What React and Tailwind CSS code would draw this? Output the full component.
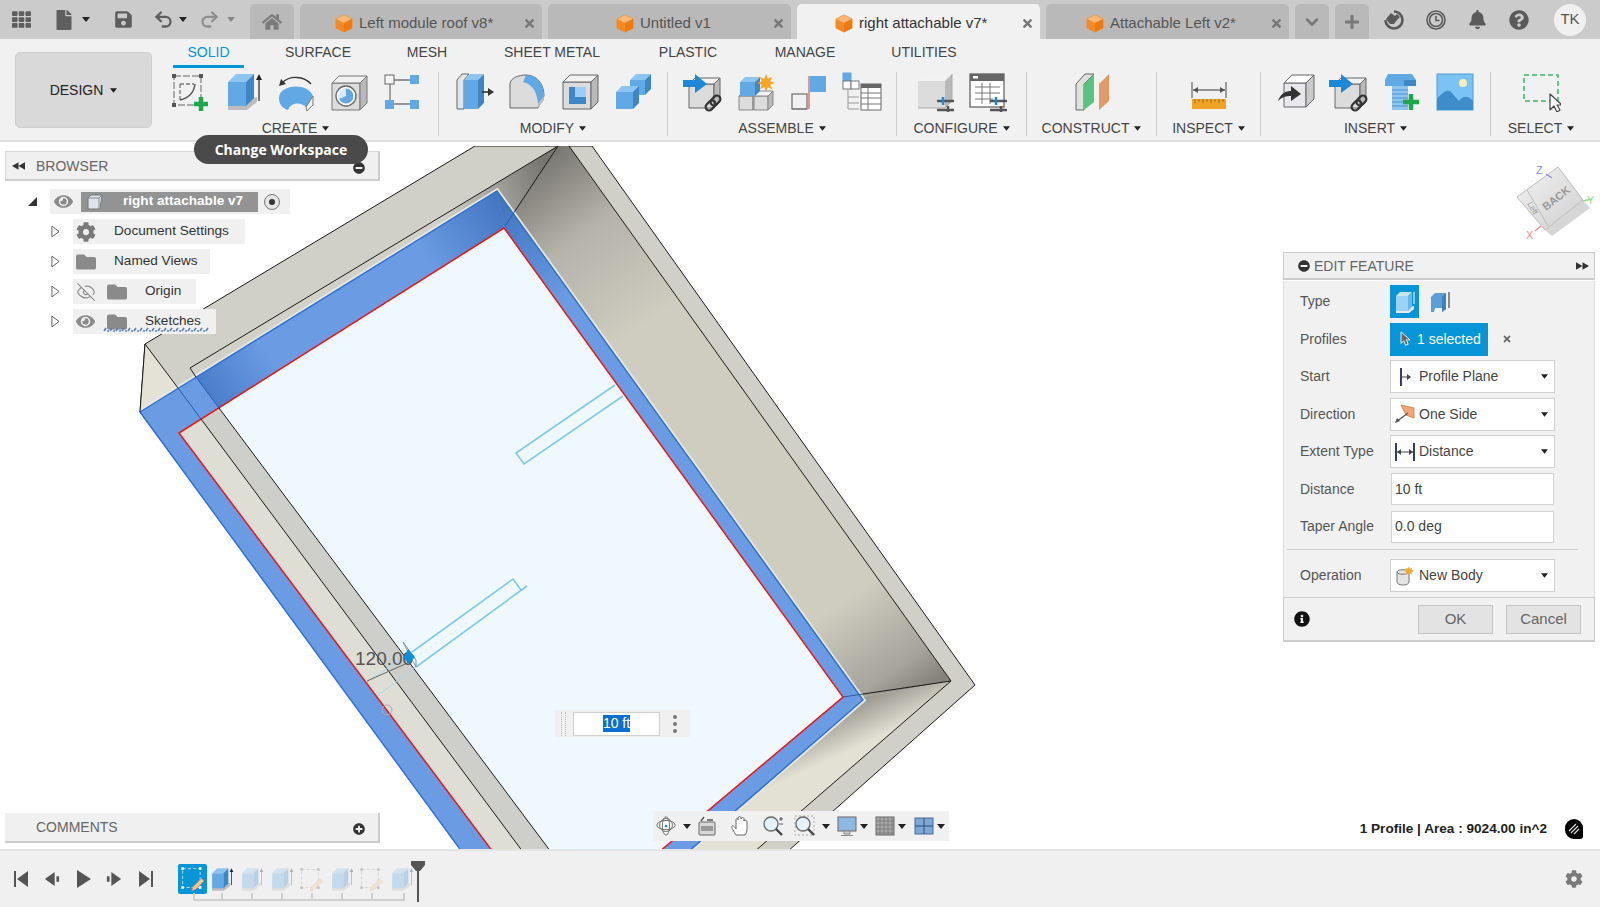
import { FaBell, FaCog, FaEye, FaFile, FaFolder, FaHome, FaInfoCircle, FaMinusCircle, FaPlus, FaPlusCircle, FaQuestionCircle, FaSave, FaTh, FaTimes } from 'react-icons/fa'
import { ChevronDown, EyeOff, Redo2, Undo2 } from 'lucide-react'

const BLUE = { front: '#62a8e5', top: '#8ec4f0', side: '#3f86c6' }
const GRAY = { front: '#dcdcdc', top: '#f2f2f2', side: '#b9b9b9' }

function Cube({ x, y, w, h, d, c = GRAY, stroke = 'none' }) {
  return (
    <g stroke={stroke} strokeWidth="1" strokeLinejoin="round">
      <rect x={x} y={y} width={w} height={h} fill={c.front} />
      <polygon points={`${x},${y} ${x + d},${y - d} ${x + w + d},${y - d} ${x + w},${y}`} fill={c.top} />
      <polygon points={`${x + w},${y} ${x + w + d},${y - d} ${x + w + d},${y + h - d} ${x + w},${y + h}`} fill={c.side} />
    </g>
  )
}

function Svg({ children, className = 'w-10 h-10', box = '0 0 40 40' }) {
  return <svg viewBox={box} className={`${className} shrink-0`}>{children}</svg>
}

const Plus = ({ x, y, s = 7 }) => (
  <path d={`M${x - s} ${y}H${x + s}M${x} ${y - s}V${y + s}`} stroke="#1fa84a" strokeWidth="4.5" />
)

const Chain = ({ x, y }) => (
  <g fill="none" stroke="#333" strokeWidth="2.2" transform={`rotate(-45 ${x} ${y})`}>
    <rect x={x - 9} y={y - 3.5} width="11" height="7" rx="3.5" />
    <rect x={x - 2} y={y - 3.5} width="11" height="7" rx="3.5" />
  </g>
)

const Sliders = ({ x, y }) => (
  <g>
    <path d={`M${x} ${y}H${x + 17}M${x} ${y + 9}H${x + 17}`} stroke="#555" strokeWidth="2.5" />
    <path d={`M${x + 6} ${y - 4}V${y + 4}`} stroke="#1e88d8" strokeWidth="2.5" />
    <path d={`M${x + 11} ${y + 5}V${y + 13}`} stroke="#555" strokeWidth="2.5" />
  </g>
)

const Star = ({ cx, cy, r = 8, fill = '#f5a623' }) => {
  const pts = []
  for (let i = 0; i < 16; i++) {
    const a = (i * Math.PI) / 8
    const rad = i % 2 ? r * 0.5 : r
    pts.push(`${cx + rad * Math.cos(a)},${cy + rad * Math.sin(a)}`)
  }
  return <polygon points={pts.join(' ')} fill={fill} />
}

function SketchIcon({ pencil, light, className }) {
  const c = light ? '#fff' : '#666'
  return (
    <Svg className={className}>
      <rect x="4" y="4" width="27" height="29" fill="none" stroke={c} strokeWidth="1" strokeDasharray={pencil ? '5 3' : '7 2'} />
      {[[4, 4], [31, 4], [4, 33], [31, 33]].map(([x, y]) => (
        <rect key={x + '-' + y} x={x - 2} y={y - 2} width="4" height="4" fill={light ? '#fff' : '#555'} />
      ))}
      {pencil ? (
        <path d="M20 32L33 19l4 4-13 13-6 2z" fill="#f4c98a" stroke="#e26a6a" strokeWidth="1" />
      ) : (
        <>
          <path d="M10 12h14M10 12v16" stroke="#777" strokeWidth="1.3" strokeDasharray="4 2" fill="none" />
          <path d="M10 28C19 26 24 20 25 12" stroke="#555" strokeWidth="1.5" fill="none" />
          <Plus x={31} y={32} />
        </>
      )}
    </Svg>
  )
}

function ExtrudeIcon({ className }) {
  return (
    <Svg className={className}>
      <polygon points="5,33 5,38 24,38 34,30 34,25" fill="#bdbdbd" />
      <Cube x={5} y={10} w={18} h={24} d={8} c={BLUE} />
      <path d="M36 29V5" stroke="#222" strokeWidth="1.2" />
      <path d="M36 2l-3 6h6z" fill="#222" />
    </Svg>
  )
}

const RevolveIcon = () => (
  <Svg>
    <path d="M3 26C3 12 32 10 37 24L30 35C25 30 15 30 12 38 6 36 3 32 3 26z" fill="#62a8e5" />
    <path d="M30 35L37 24V33L31 39z" fill="#f2f2f2" stroke="#777" strokeWidth="1" />
    <path d="M6 11C14 3 28 4 35 12" stroke="#333" strokeWidth="1.3" fill="none" />
    <path d="M3 14l2-7 5 5z" fill="#333" />
  </Svg>
)

const HoleIcon = () => (
  <Svg>
    <Cube x={3} y={11} w={28} h={27} d={7} stroke="#777" />
    <circle cx="17" cy="24" r="10" fill="#fff" stroke="#666" strokeWidth="1.3" />
    <circle cx="17" cy="24" r="7.5" fill="#62a8e5" />
    <path d="M17 24V16.5A7.5 7.5 0 0 0 10 27z" fill="#dbeaf7" />
  </Svg>
)

const PatternIcon = () => (
  <Svg>
    <path d="M8 8H32M8 8V32M8 32H32" stroke="#777" strokeWidth="1.3" />
    <rect x="3" y="3" width="9" height="9" fill="#f4f4f4" stroke="#666" />
    <rect x="28" y="3" width="9" height="9" fill="#62a8e5" />
    <rect x="3" y="28" width="9" height="9" fill="#62a8e5" />
    <rect x="28" y="28" width="9" height="9" fill="#62a8e5" />
  </Svg>
)

const PressIcon = () => (
  <Svg>
    <polygon points="3,8 8,2 15,2 10,8 10,37 3,37" fill="#e5e5e5" stroke="#666" />
    <Cube x={10} y={8} w={14} h={29} d={6} c={BLUE} />
    <path d="M28 20h8" stroke="#333" strokeWidth="1.6" />
    <path d="M40 20l-6-4v8z" fill="#333" />
  </Svg>
)

const FilletIcon = () => (
  <Svg>
    <path d="M3 36V12C3 6 12 3 19 3C30 3 37 12 37 24L31 36z" fill="#dcdcdc" stroke="#666" />
    <path d="M19 3C30 3 37 12 37 24L31 32C30 21 27 13 16 10z" fill="#62a8e5" />
    <path d="M31 32L37 24V28L31 36z" fill="#bcbcbc" />
  </Svg>
)

const ShellIcon = () => (
  <Svg>
    <Cube x={3} y={10} w={28} h={27} d={7} stroke="#666" />
    <rect x="9" y="15" width="17" height="17" fill="#9dcdf2" />
    <path d="M9 15h6v10h11v7H9z" fill="#3f86c6" />
  </Svg>
)

const CombineIcon = () => (
  <Svg>
    <Cube x={17} y={8} w={15} h={15} d={6} c={BLUE} />
    <Cube x={3} y={20} w={17} h={17} d={6} c={BLUE} />
  </Svg>
)

const LinkCubeIcon = () => (
  <Svg>
    <Cube x={6} y={12} w={25} h={24} d={6} stroke="#666" />
    <path d="M0 8h12V2l12 10-12 9v-6H0z" fill="#1e88d8" />
    <Chain x={30} y={31} />
  </Svg>
)

const NewCompIcon = () => (
  <Svg>
    <Cube x={3} y={24} w={14} h={14} d={5} stroke="#888" />
    <Cube x={18} y={24} w={14} h={14} d={5} stroke="#888" />
    <Cube x={4} y={10} w={15} h={14} d={5} c={BLUE} />
    <Star cx={30} cy={11} r={9} />
  </Svg>
)

const JointIcon = () => (
  <Svg>
    <rect x="3" y="22" width="15" height="15" fill="none" stroke="#777" strokeWidth="1.3" />
    <path d="M20 4V37" stroke="#e26a6a" strokeWidth="1.4" />
    <rect x="21" y="4" width="16" height="16" fill="#62a8e5" />
    <path d="M18 37H3" stroke="#777" />
  </Svg>
)

const TreeTableIcon = () => (
  <Svg>
    <rect x="1" y="1" width="8" height="8" fill="#62a8e5" stroke="#62a8e5" />
    <rect x="1" y="9" width="8" height="8" fill="#fff" stroke="#777" />
    <rect x="9" y="9" width="8" height="8" fill="#fff" stroke="#777" />
    <path d="M6 17V37H17M6 25H17M6 31H17" stroke="#999" fill="none" />
    <rect x="19" y="12" width="20" height="26" fill="#fff" stroke="#666" />
    <rect x="19" y="12" width="20" height="4" fill="#666" />
    <path d="M19 21H39M19 26H39M19 32H39M26 16V38" stroke="#777" />
  </Svg>
)

const ConfigCubeIcon = () => (
  <Svg>
    <Cube x={3} y={9} w={27} h={27} d={7} />
    <path d="M3 36H30L37 29V2" stroke="#aaa" fill="none" />
    <Sliders x={22} y={29} />
  </Svg>
)

const ConfigTableIcon = () => (
  <Svg>
    <rect x="2" y="2" width="34" height="33" fill="#fff" stroke="#666" strokeWidth="1.3" />
    <rect x="2" y="2" width="34" height="7" fill="#666" />
    <rect x="5" y="4" width="5" height="2.5" fill="#fff" />
    <path d="M7 15H32M7 21H32M7 27H25M14 11V32M22 11V32" stroke="#777" />
    <Sliders x={22} y={29} />
  </Svg>
)

const ConstructIcon = () => (
  <Svg>
    <polygon points="4,12 13,2 22,2 12,12 12,38 4,38" fill="#e0e0e0" stroke="#666" />
    <polygon points="12,12 22,2 22,30 12,38" fill="#5ac27f" />
    <polygon points="27,12 37,2 37,29 27,38" fill="#e29a68" />
  </Svg>
)

const InspectIcon = () => (
  <Svg>
    <path d="M3 10V26M37 10V26" stroke="#666" strokeWidth="1.2" />
    <path d="M4 18H36" stroke="#555" strokeWidth="1.2" />
    <path d="M4 18l5-3v6zM36 18l-5-3v6z" fill="#555" />
    <rect x="3" y="27" width="34" height="10" fill="#f0a326" />
    <path d="M6 27v4M10 27v3M14 27v4M18 27v3M22 27v4M26 27v3M30 27v4M34 27v3" stroke="#9a6a10" />
  </Svg>
)

const InsertCubeIcon = () => (
  <Svg>
    <Cube x={8} y={11} w={22} h={24} d={8} c={{ front: '#e8e8ec', top: '#fff', side: '#c9c9c9' }} stroke="#666" />
    <path d="M2 29C5 21 10 19 15 19V14L25 22 15 29V24C10 24 6 25 2 29z" fill="#333" />
  </Svg>
)

const BoltIcon = () => (
  <Svg>
    <path d="M3 8L6 2H30L34 8V14H3z" fill="#62a8e5" />
    <rect x="22" y="8" width="12" height="6" fill="#3f86c6" />
    <rect x="10" y="14" width="16" height="24" fill="#8ec4f0" />
    <path d="M10 18H26M10 22H26M10 26H26M10 30H26M10 34H26" stroke="#4b92d0" />
    <Plus x={29} y={30} s={8} />
  </Svg>
)

const PictureIcon = () => (
  <Svg>
    <rect x="2" y="2" width="36" height="36" fill="#7cc3f5" stroke="#4f9bd6" />
    <circle cx="28" cy="11" r="4" fill="#f6efb6" />
    <path d="M2 38V27C8 20 12 17 16 20L24 29C27 25 32 22 38 29V38z" fill="#3f8ccb" />
  </Svg>
)

const SelectIcon = () => (
  <Svg>
    <rect x="3" y="3" width="34" height="26" fill="none" stroke="#3fb36a" strokeWidth="1.5" strokeDasharray="5 3" />
    <path d="M29 22V38L33 34 36 40 39 38 36 33H41z" fill="#fff" stroke="#444" strokeWidth="1.2" strokeLinejoin="round" />
  </Svg>
)

const OrangeCube = () => (
  <Svg className="w-[18px] h-[19px]" box="0 0 18 19">
    <polygon points="9,1 17,5 17,14 9,18 1,14 1,5" fill="#f28a26" stroke="#f28a26" strokeLinejoin="round" />
    <polygon points="9,1 17,5 9,9 1,5" fill="#fab878" />
    <polygon points="9,9 17,5 17,14 9,18" fill="#ee7a10" />
  </Svg>
)

const Caret = ({ className = '' }) => (
  <svg viewBox="0 0 8 5" className={`w-2 h-[5px] shrink-0 ${className}`}>
    <polygon points="0,0 8,0 4,5" fill="#222" />
  </svg>
)

const GROUPS = [
  { label: 'CREATE', w: 'w-[274px] pr-[12px]', icons: [<SketchIcon key="a" />, <ExtrudeIcon key="b" />, <RevolveIcon key="c" />, <HoleIcon key="d" />, <PatternIcon key="e" />] },
  { label: 'MODIFY', w: 'w-[229px]', icons: [<PressIcon key="a" />, <FilletIcon key="b" />, <ShellIcon key="c" />, <CombineIcon key="d" />] },
  { label: 'ASSEMBLE', w: 'w-[229px]', icons: [<LinkCubeIcon key="a" />, <NewCompIcon key="b" />, <JointIcon key="c" />, <TreeTableIcon key="d" />] },
  { label: 'CONFIGURE', w: 'w-[130px]', icons: [<ConfigCubeIcon key="a" />, <ConfigTableIcon key="b" />] },
  { label: 'CONSTRUCT', w: 'w-[130px]', icons: [<ConstructIcon key="a" />] },
  { label: 'INSPECT', w: 'w-[104px]', icons: [<InspectIcon key="a" />] },
  { label: 'INSERT', w: 'w-[230px]', icons: [<InsertCubeIcon key="a" />, <LinkCubeIcon key="b" />, <BoltIcon key="c" />, <PictureIcon key="d" />] },
  { label: 'SELECT', w: 'w-[100px]', icons: [<SelectIcon key="a" />], last: true },
]

const RIBBON_TABS = [
  ['SOLID', 'w-[71px] text-[#0696d7] border-b-[3px] border-[#0696d7]'],
  ['SURFACE', 'w-[148px]'],
  ['MESH', 'w-[70px]'],
  ['SHEET METAL', 'w-[180px]'],
  ['PLASTIC', 'w-[92px]'],
  ['MANAGE', 'w-[142px]'],
  ['UTILITIES', 'w-[96px]'],
]

function DocTab({ name, width, pad, active }) {
  return (
    <div className={`${width} ${pad} ${active ? 'bg-[#f1f1f1] text-[#333]' : 'bg-[#b9b9b9] text-[#555]'} h-[35px] pt-[3px] rounded-t-[5px] flex items-center gap-[6px] pr-[6px] shrink-0`}>
      <OrangeCube />
      <span className="text-[15px] whitespace-nowrap">{name}</span>
      <FaTimes className="ml-auto text-[13px] text-[#777]" />
    </div>
  )
}

function TitleBar() {
  return (
    <div className="h-[39px] bg-[#cbcbcb] flex items-end shrink-0">
      <div className="w-[250px] h-full flex items-center text-[#5e5e5e] shrink-0">
        <FaTh className="ml-[12px] text-[19px]" />
        <FaFile className="ml-[23px] text-[20px]" />
        <Caret className="ml-[8px]" />
        <FaSave className="ml-[24px] text-[19px]" />
        <Undo2 className="ml-[20px] w-[21px] h-[21px]" strokeWidth={2.6} />
        <Caret className="ml-[5px]" />
        <Redo2 className="ml-[12px] w-[21px] h-[21px] text-[#8f8f8f]" strokeWidth={2.6} />
        <Caret className="ml-[7px] opacity-40" />
      </div>
      <div className="w-[44px] h-[35px] bg-[#b9b9b9] rounded-t-[5px] flex items-center justify-center text-[#7b7b7b] shrink-0">
        <FaHome className="text-[20px]" />
      </div>
      <div className="flex gap-[6px] ml-[6px]">
        <DocTab name="Left module roof v8*" width="w-[242px]" pad="pl-[35px]" />
        <DocTab name="Untitled v1" width="w-[243px]" pad="pl-[68px]" />
        <DocTab name="right attachable v7*" width="w-[243px]" pad="pl-[38px]" active />
        <DocTab name="Attachable Left v2*" width="w-[243px]" pad="pl-[40px]" />
        <div className="w-[34px] h-[35px] bg-[#b9b9b9] rounded-t-[5px] flex items-center justify-center text-[#777]">
          <ChevronDown className="w-[20px] h-[20px]" strokeWidth={3} />
        </div>
        <div className="w-[34px] h-[35px] bg-[#b9b9b9] rounded-t-[5px] flex items-center justify-center text-[#777]">
          <FaPlus className="text-[16px]" />
        </div>
      </div>
      <div className="h-full flex items-center text-[#5a5a5a]">
        <svg viewBox="0 0 20 20" className="ml-[15px] w-5 h-5 shrink-0">
          <path d="M10 1.5A8.5 8.5 0 1 1 1.5 10" fill="none" stroke="#5a5a5a" strokeWidth="2.6" />
          <path d="M2 9L7 3l4 3 2-2 3 3-3 3-3 4H6z" fill="#5a5a5a" />
        </svg>
        <svg viewBox="0 0 20 20" className="ml-[22px] w-5 h-5 shrink-0">
          <circle cx="10" cy="10" r="9" fill="none" stroke="#5a5a5a" strokeWidth="1.6" />
          <circle cx="10" cy="10" r="6.5" fill="none" stroke="#5a5a5a" strokeWidth="1.6" />
          <path d="M10 6v4.5h3.5" fill="none" stroke="#5a5a5a" strokeWidth="1.6" />
        </svg>
        <FaBell className="ml-[22px] text-[19px]" />
        <FaQuestionCircle className="ml-[22px] text-[20px]" />
        <div className="ml-[25px] w-8 h-8 rounded-full bg-[#f0f0f0] flex items-center justify-center text-[15px] text-[#555]">TK</div>
      </div>
    </div>
  )
}

function Ribbon() {
  return (
    <div className="h-[103px] bg-[#f1f1f1] border-b-2 border-[#dedede] flex shrink-0">
      <div className="ml-[15px] mt-[13px] w-[137px] h-[76px] bg-[#d9d9d9] border border-[#cfcfcf] rounded-[5px] flex items-center justify-center gap-[7px] text-[14px] text-[#222] shrink-0">
        DESIGN <Caret className="w-[7px]" />
      </div>
      <div className="ml-[13px] flex flex-col">
        <div className="flex pl-[8px] h-[29px] text-[14px] text-[#444]">
          {RIBBON_TABS.map(([name, cls]) => (
            <div key={name} className={`${cls} h-[29px] pt-[3px] text-center whitespace-nowrap leading-5`}>{name}</div>
          ))}
        </div>
        <div className="flex mt-[4px]">
          {GROUPS.map((g) => (
            <div key={g.label} className={`${g.w} h-[64px] flex flex-col items-center ${g.last ? '' : 'border-r border-[#cccccc]'}`}>
              <div className="h-[49px] flex gap-[13px] shrink-0">{g.icons}</div>
              <div className="h-[15px] flex items-center gap-[5px] text-[14px] text-[#444] shrink-0">
                {g.label} <Caret className="w-[7px]" />
              </div>
            </div>
          ))}
        </div>
      </div>
    </div>
  )
}

function Model() {
  return (
    <svg viewBox="0 142 1600 707" className="absolute inset-0 w-[1600px] h-[707px]">
      <defs>
        <linearGradient id="wallRight" gradientUnits="userSpaceOnUse" x1="555" y1="150" x2="935" y2="680">
          <stop offset="0" stopColor="#797772" />
          <stop offset="0.13" stopColor="#b5b3aa" />
          <stop offset="0.3" stopColor="#cfccc0" />
          <stop offset="0.82" stopColor="#cfccc0" />
          <stop offset="0.95" stopColor="#a6a49b" />
          <stop offset="1" stopColor="#85837c" />
        </linearGradient>
        <linearGradient id="wallTop" gradientUnits="userSpaceOnUse" x1="440" y1="210" x2="545" y2="170">
          <stop offset="0" stopColor="#d2d1c8" />
          <stop offset="1" stopColor="#787671" />
        </linearGradient>
        <linearGradient id="floorRight" gradientUnits="userSpaceOnUse" x1="885" y1="682" x2="905" y2="725">
          <stop offset="0" stopColor="#8e8c84" />
          <stop offset="1" stopColor="#e3e0d4" />
        </linearGradient>
        <linearGradient id="blueCorner" gradientUnits="userSpaceOnUse" x1="503" y1="205" x2="566" y2="300">
          <stop offset="0" stopColor="#4276c0" />
          <stop offset="1" stopColor="#6a9be3" />
        </linearGradient>
        <linearGradient id="blueCornerTop" gradientUnits="userSpaceOnUse" x1="505" y1="205" x2="425" y2="258">
          <stop offset="0" stopColor="#4276c0" />
          <stop offset="1" stopColor="#6a9be3" />
        </linearGradient>
        <linearGradient id="blueCornerLeft" gradientUnits="userSpaceOnUse" x1="207" y1="392" x2="268" y2="355">
          <stop offset="0" stopColor="#4a7ecb" />
          <stop offset="1" stopColor="#6a9be3" />
        </linearGradient>
        <linearGradient id="cubeFace" x1="0" y1="0" x2="1" y2="1">
          <stop offset="0" stopColor="#f2f2f2" />
          <stop offset="1" stopColor="#cfcfcf" />
        </linearGradient>
      </defs>

      <polygon points="145,344 475,146 592,146 975,685 787,852 465,852 140,412" fill="#d0cfc8" stroke="#1a1a1a" strokeWidth="1" />
      <polygon points="145,344 140,412 178,388" fill="#e4e2d7" />
      <polygon points="190,368 558,146 515,211 497,191 205,372" fill="url(#wallTop)" />
      <polygon points="558,146 569,146 951,681 863,697 497,191 515,211" fill="url(#wallRight)" />
      <polygon points="951,681 863,697 688,852 754,852" fill="url(#floorRight)" />

      <polygon points="179,433 201,419 523,852 493,852" fill="#dfded4" />
      <polygon points="201,419 219,408 551,852 523,852" fill="#cececa" />
      <polygon points="504,228 843,697 659,852 551,852 219,408" fill="#f0f8ff" />

      <path d="M140 412L497 191L863 700L688 852" fill="none" stroke="#e8e7e0" strokeWidth="5" />
      <path d="M140 412L497 191L863 700L688 852H462ZM179 433L493 852H659L843 697L504 228Z" fill="#6a9be3" fillRule="evenodd" />
      <polygon points="497,191 504,228 562,308 570,292" fill="url(#blueCorner)" />
      <polygon points="497,191 504,228 430,275 420,239" fill="url(#blueCornerTop)" />
      <polygon points="196,377 219,408 280,370 256,340" fill="url(#blueCornerLeft)" />
      <path d="M140 412L497 191L863 700L688 852M140 412L462 852" fill="none" stroke="#2e6fd0" strokeWidth="1.4" />
      <path d="M493 852L179 433L504 228L843 697L659 852" fill="none" stroke="#f01414" strokeWidth="1.5" />

      <g stroke="#1a1a1a" strokeWidth="1" fill="none">
        <path d="M145 344L178 388M201 419L523 852M190 368L558 146L515 211M190 368L196 377M219 408L551 852" />
        <path d="M569 146L951 681L754 852M951 681L863 694" />
        <path d="M145 344L140 412" />
      </g>
      <path d="M178 388L201 419M196 377L219 408M515 211L505 226M863 694L843 697" stroke="#2a5aa5" strokeWidth="1" fill="none" />

      <g stroke="#7fc9ec" strokeWidth="1.6" fill="none">
        <path d="M615 385L516 453L524 464L623 396" />
        <path d="M412 652L513 579L521 590M416 667L527 586" />
      </g>
      <path d="M378 695L416 667M367 682L412 652" stroke="#a8d8ee" strokeWidth="1" fill="none" />
      <path d="M367 681L412 661" stroke="#666" strokeWidth="1" fill="none" />
      <path d="M420 654L470 621" stroke="#ddd" strokeWidth="1" strokeDasharray="2 4" fill="none" />
      <circle cx="387" cy="710" r="5" fill="none" stroke="#aab" strokeWidth="1" />
      <text x="355" y="665" fontFamily="Liberation Sans" fontSize="19" fill="#555">120.00</text>
      <path d="M403 642L416 660V667L408 652z" fill="none" stroke="#7a93a8" strokeWidth="1" />
      <polygon points="408,649 415,657 408,664 404,657" fill="#0a8fe0" />

      <g>
        <polygon points="1545,230 1583,200 1590,208 1552,236" fill="#8a8a8a" opacity="0.35" />
        <polygon points="1558,167 1583,200 1545,230 1517,197" fill="url(#cubeFace)" stroke="#bdbdbd" strokeWidth="1" />
        <path d="M1527 190L1548 226" stroke="#bdbdbd" fill="none" />
        <text x="1556" y="202" fontFamily="Liberation Sans" fontSize="11" fontWeight="bold" fill="#9a9a9a" textAnchor="middle" transform="rotate(-38 1556 198)">BACK</text>
        <text x="1533" y="211" fontFamily="Liberation Sans" fontSize="8" fill="#9a9a9a" textAnchor="middle" transform="rotate(58 1533 208)">Left</text>
        <path d="M1546 174L1552 178" stroke="#8d8dff" strokeWidth="1.5" />
        <path d="M1583 201L1592 199" stroke="#8de08d" strokeWidth="1.5" />
        <path d="M1535 231L1541 226" stroke="#ff8d8d" strokeWidth="1.5" />
        <text x="1536" y="174" fontFamily="Liberation Sans" fontSize="11" fill="#8d8dff">Z</text>
        <text x="1587" y="204" fontFamily="Liberation Sans" fontSize="11" fill="#8de08d">Y</text>
        <text x="1526" y="239" fontFamily="Liberation Sans" fontSize="11" fill="#ff8d8d">X</text>
      </g>
      <rect x="0" y="142" width="1600" height="4" fill="#fff" />
    </svg>
  )
}

const Eye = () => <FaEye className="text-[19px] text-[#8a8a8a] shrink-0" />
const Folder = () => <FaFolder className="text-[20px] text-[#8a8a8a] shrink-0" />
const Expand = () => (
  <svg viewBox="0 0 10 14" className="w-[9px] h-[13px] ml-[2px] mr-[13px] shrink-0">
    <polygon points="1,1 9,7 1,13" fill="#fff" stroke="#555" strokeWidth="1" />
  </svg>
)

function Browser() {
  return (
    <>
      <div className="absolute left-[5px] top-[9px] w-[375px] h-[30px] pt-px bg-[#f0f0f0] border border-[#d9d9d9] border-r-2 border-b-2 border-r-[#ccc] border-b-[#ccc] flex items-center text-[14px] text-[#666]">
        <svg viewBox="0 0 14 8" className="ml-[6px] w-[13px] h-[8px]"><path d="M7 0v8L0 4zM14 0v8L7 4z" fill="#333" /></svg>
        <span className="ml-[11px]">BROWSER</span>
        <FaMinusCircle className="absolute right-[13px] top-[10px] text-[12px] text-[#333]" />
      </div>
      <div className="absolute left-0 top-[47px] flex flex-col gap-[5px] text-[13.6px] text-[#333]">
        <div className="flex items-center ml-[28px] h-[25px]">
          <svg viewBox="0 0 9 9" className="w-[9px] h-[9px] mr-[13px]"><polygon points="9,0 9,9 0,9" fill="#333" /></svg>
          <div className="w-[240px] h-[25px] bg-[#f0f0f0] flex items-center">
            <span className="ml-[4px]"><Eye /></span>
            <div className="ml-[8px] w-[177px] h-[20px] bg-[#939393] flex items-center">
              <svg viewBox="0 0 16 16" className="ml-[6px] w-4 h-4">
                <polygon points="1,4 4,1 15,1 13,15 1,15" fill="#dfe3ea" stroke="#777" />
                <path d="M12 4L15 1M12 4V15M1 4H12" stroke="#888" />
              </svg>
              <span className="ml-[20px] font-bold text-white whitespace-nowrap">right attachable v7</span>
            </div>
            <div className="ml-[6px] w-[16px] h-[16px] rounded-full bg-[#e6e6e6] border border-[#777] flex items-center justify-center">
              <div className="w-[6px] h-[6px] rounded-full bg-[#333]" />
            </div>
          </div>
        </div>
        <div className="flex items-center ml-[49px] h-[25px]">
          <Expand />
          <div className="w-[172px] h-[25px] bg-[#f0f0f0] flex items-center">
            <FaCog className="ml-[3px] text-[20px] text-[#7a7a7a]" />
            <span className="ml-[18px]">Document Settings</span>
          </div>
        </div>
        <div className="flex items-center ml-[49px] h-[25px]">
          <Expand />
          <div className="w-[137px] h-[25px] bg-[#f0f0f0] flex items-center">
            <span className="ml-[3px]"><Folder /></span>
            <span className="ml-[18px]">Named Views</span>
          </div>
        </div>
        <div className="flex items-center ml-[49px] h-[25px]">
          <Expand />
          <div className="w-[123px] h-[25px] bg-[#f0f0f0] flex items-center">
            <EyeOff className="ml-[3px] w-[20px] h-[20px] text-[#8a8a8a]" strokeWidth={1.3} />
            <span className="ml-[11px]"><Folder /></span>
            <span className="ml-[18px]">Origin</span>
          </div>
        </div>
        <div className="flex items-center ml-[49px] h-[25px]">
          <Expand />
          <div className="relative w-[143px] h-[25px] bg-[#f0f0f0] flex items-center">
            <span className="ml-[3px]"><Eye /></span>
            <span className="ml-[12px]"><Folder /></span>
            <span className="ml-[18px]">Sketches</span>
            <svg viewBox="0 0 110 5" className="absolute left-[30px] top-[18px] w-[110px] h-[5px]">
              <path d="M1 4L3 1M7 4L9 1M13 4L15 1M19 4L21 1M25 4L27 1M31 4L33 1M37 4L39 1M43 4L45 1M49 4L51 1M55 4L57 1M61 4L63 1M67 4L69 1M73 4L75 1M79 4L81 1M85 4L87 1M91 4L93 1M97 4L99 1M103 4L105 1M4 4H6M10 4H12M16 4H18M22 4H24M28 4H30M34 4H36M40 4H42M46 4H48M52 4H54M58 4H60M64 4H66M70 4H72M76 4H78M82 4H84M88 4H90M94 4H96M100 4H102" stroke="#5c7fb8" strokeWidth="1.6" fill="none" />
            </svg>
          </div>
        </div>
      </div>
    </>
  )
}

function PanelRow({ label, children, tail }) {
  return (
    <div className="flex items-center h-[33px] mb-[4.5px]">
      <div className="w-[106px] pl-[16px] text-[14px] text-[#555] whitespace-nowrap shrink-0">{label}</div>
      {children}
      {tail}
    </div>
  )
}

function Select({ icon, value }) {
  return (
    <div className="w-[165px] h-[33px] bg-white border border-[#cfcfcf] flex items-center text-[14px] text-[#444]">
      <div className="w-[28px] flex justify-center shrink-0">{icon}</div>
      <span>{value}</span>
      <Caret className="ml-auto mr-[6px] w-[7px]" />
    </div>
  )
}

function TextField({ value }) {
  return (
    <div className="w-[163px] h-[32px] ml-px bg-white border border-[#d4d4d4] flex items-center pl-[3px] text-[14px] text-[#444]">{value}</div>
  )
}

function EditFeature() {
  return (
    <div className="absolute left-[1283px] top-[110px] w-[312px] flex flex-col">
      <div className="h-[28px] pt-px bg-[#f1f1f1] border border-[#ccc] border-b-2 flex items-center text-[14px] text-[#666]">
        <FaMinusCircle className="ml-[14px] text-[12px] text-[#333]" />
        <span className="ml-[4px]">EDIT FEATURE</span>
        <svg viewBox="0 0 14 8" className="ml-auto mr-[5px] w-[13px] h-[8px]"><path d="M0 0v8l7-4zM7 0v8l7-4z" fill="#333" /></svg>
      </div>
      <div className="mt-px h-[316px] bg-[#f1f1f1] border-x border-[#ddd] pt-[4px]">
        <PanelRow label="Type">
          <div className="w-[29px] h-[33px] bg-[#0696d7] flex items-center justify-center">
            <svg viewBox="0 0 22 24" className="w-[22px] h-[24px]">
              <polygon points="2,20 2,23 15,23 20,19 20,16" fill="#e8e8e8" />
              <Cube x={2} y={6} w={12} h={15} d={4} c={{ front: '#9dd2f7', top: '#c4e5fb', side: '#6cb5ea' }} />
              <path d="M20 14V2" stroke="#fff" strokeWidth="1" />
            </svg>
          </div>
          <svg viewBox="0 0 22 24" className="ml-[10px] w-[22px] h-[24px]">
            <polygon points="2,7 6,3 17,3 17,19 13,22 13,18 6,18 5,22 2,22" fill="#5a9fda" />
            <polygon points="13,7 17,3 17,19 13,22" fill="#3f7fbc" />
            <path d="M20 18V2" stroke="#222" strokeWidth="1" />
          </svg>
        </PanelRow>
        <PanelRow label="Profiles" tail={<FaTimes className="ml-[14px] text-[10px] text-[#666]" />}>
          <div className="w-[98px] h-[33px] bg-[#0696d7] flex items-center text-[14px] text-white">
            <svg viewBox="0 0 12 18" className="ml-[10px] w-[11px] h-[16px]"><path d="M1 1V14L4 11 6 16 9 15 7 10H11z" fill="#666" stroke="#fff" strokeWidth="1" /></svg>
            <span className="ml-[6px]">1 selected</span>
          </div>
        </PanelRow>
        <PanelRow label="Start">
          <Select value="Profile Plane" icon={
            <svg viewBox="0 0 14 20" className="w-[14px] h-[20px]"><path d="M3 1V19" stroke="#1a2a5a" strokeWidth="1.8" /><path d="M3 10H10" stroke="#444" /><path d="M13 10l-4-3v6z" fill="#444" /></svg>
          } />
        </PanelRow>
        <PanelRow label="Direction">
          <Select value="One Side" icon={
            <svg viewBox="0 0 22 20" className="w-[22px] h-[20px]"><polygon points="7,1 20,4 20,14 12,11" fill="#eda778" stroke="#d58a58" /><path d="M2 18L14 9" stroke="#555" strokeWidth="1.3" /><path d="M1 19l2-5 3 3z" fill="#555" /></svg>
          } />
        </PanelRow>
        <PanelRow label="Extent Type">
          <Select value="Distance" icon={
            <svg viewBox="0 0 22 20" className="w-[22px] h-[20px]"><path d="M2 1V19M20 1V19" stroke="#1a2a5a" strokeWidth="1.8" /><path d="M3 10H19" stroke="#444" /><path d="M3 10l4-3v6zM19 10l-4-3v6z" fill="#444" /></svg>
          } />
        </PanelRow>
        <PanelRow label="Distance"><TextField value="10 ft" /></PanelRow>
        <PanelRow label="Taper Angle"><TextField value="0.0 deg" /></PanelRow>
        <div className="ml-[3px] mr-[16px] h-px bg-[#ccc] mt-[6px] mb-[9px]" />
        <PanelRow label="Operation">
          <Select value="New Body" icon={
            <svg viewBox="0 0 20 20" className="w-[20px] h-[20px]"><path d="M2 6C2 3 14 3 14 6V16C14 20 2 20 2 16z" fill="#e4e4e4" stroke="#777" /><path d="M2 6C2 9 14 9 14 6" fill="none" stroke="#777" /><Star cx={14} cy={5} r={5} /></svg>
          } />
        </PanelRow>
      </div>
      <div className="h-[45px] bg-[#f1f1f1] border border-[#ccc] border-b-2 flex items-center">
        <FaInfoCircle className="ml-[10px] text-[16px] text-[#111]" />
        <div className="ml-[108px] w-[75px] h-[29px] bg-[#e3e3e3] border border-[#c4c4c4] flex items-center justify-center text-[15px] text-[#666]">OK</div>
        <div className="ml-[13px] w-[75px] h-[29px] bg-[#e3e3e3] border border-[#c4c4c4] flex items-center justify-center text-[15px] text-[#666]">Cancel</div>
      </div>
    </div>
  )
}

function Comments() {
  return (
    <div className="absolute left-[5px] top-[671px] w-[375px] h-[30px] pt-px bg-[#f0f0f0] border-r-2 border-b-2 border-[#ccc] flex items-center text-[14px] text-[#666]">
      <span className="ml-[31px]">COMMENTS</span>
      <FaPlusCircle className="absolute right-[13px] top-[10px] text-[12px] text-[#333]" />
    </div>
  )
}

function ValueInput() {
  return (
    <div className="absolute left-[555px] top-[568px] w-[135px] h-[27px] bg-[#f0f0f0] flex items-center">
      <div className="ml-[6px] w-[5px] h-[24px] border-x border-dotted border-[#bbb]" />
      <div className="ml-[7px] w-[87px] h-[24px] bg-white border border-[#cfcfcf] flex items-center justify-center text-[14px]">
        <span className="bg-[#0a6fd0] text-white leading-[17px]">10 ft</span>
      </div>
      <div className="ml-[13px] flex flex-col gap-[3px]">
        <div className="w-1 h-1 rounded-full bg-[#777]" />
        <div className="w-1 h-1 rounded-full bg-[#777]" />
        <div className="w-1 h-1 rounded-full bg-[#777]" />
      </div>
    </div>
  )
}

function NavBar() {
  const tiny = 'w-[22px] h-[22px] shrink-0'
  return (
    <div className="absolute left-[653px] top-[669px] w-[296px] h-[30px] bg-[#f0f0f0] flex items-center">
      <svg viewBox="0 0 22 24" className={`ml-[2px] ${tiny}`}>
        <circle cx="11" cy="11" r="7" fill="#fff" stroke="#666" />
        <ellipse cx="11" cy="11" rx="10" ry="5" fill="none" stroke="#666" />
        <ellipse cx="11" cy="12" rx="4" ry="10" fill="none" stroke="#666" />
        <circle cx="11" cy="12" r="1.5" fill="#1e88d8" />
      </svg>
      <Caret className="ml-[6px]" />
      <svg viewBox="0 0 22 22" className={`ml-[5px] ${tiny}`}>
        <rect x="3" y="7" width="16" height="13" rx="1" fill="#d8d8d8" stroke="#666" />
        <rect x="5" y="11" width="12" height="5" fill="#999" />
        <path d="M5 6L8 2M11 5H17" stroke="#555" strokeWidth="1.4" />
      </svg>
      <svg viewBox="0 0 22 22" className={`ml-[12px] ${tiny}`}>
        <path d="M6 20C4 17 1 12 2 11S5 12 6 14V5c0-2 2-2 2 0V3c0-2 3-2 3 0v1c0-2 3-2 3 0v2c0-2 3-1 3 1v7c0 3-1 5-2 6z" fill="#fff" stroke="#666" />
      </svg>
      <svg viewBox="0 0 22 22" className={`ml-[10px] ${tiny}`}>
        <circle cx="9" cy="9" r="7" fill="#e6f2fb" stroke="#666" strokeWidth="1.3" />
        <path d="M14 14L20 20" stroke="#444" strokeWidth="2.4" />
        <path d="M17 4H21M19 2V6M17 9H21" stroke="#555" />
      </svg>
      <svg viewBox="0 0 22 22" className={`ml-[10px] ${tiny}`}>
        <rect x="1" y="1" width="19" height="19" fill="none" stroke="#aaa" strokeDasharray="2 2" />
        <circle cx="9" cy="9" r="7" fill="#e6f2fb" stroke="#666" strokeWidth="1.3" />
        <path d="M14 14L20 20" stroke="#444" strokeWidth="2.4" />
      </svg>
      <Caret className="ml-[6px]" />
      <svg viewBox="0 0 22 22" className={`ml-[6px] ${tiny}`}>
        <rect x="2" y="2" width="18" height="14" fill="#8fb8e0" stroke="#666" />
        <path d="M8 16H14V19H8zM5 20.5H17" stroke="#888" fill="#ccc" />
      </svg>
      <Caret className="ml-[2px]" />
      <svg viewBox="0 0 22 22" className={`ml-[6px] ${tiny}`}>
        <rect x="2" y="2" width="18" height="18" fill="#a8a8a8" stroke="#666" />
        <path d="M2 6H20M2 10H20M2 14H20M2 18H20M6 2V20M10 2V20M14 2V20M18 2V20" stroke="#777" strokeWidth="0.8" />
      </svg>
      <Caret className="ml-[2px]" />
      <svg viewBox="0 0 22 22" className={`ml-[7px] ${tiny}`}>
        <rect x="2" y="3" width="18" height="16" fill="#7fa7d4" stroke="#4a6a95" />
        <path d="M11 3V19M2 11H20" stroke="#2f4f7a" />
      </svg>
      <Caret className="ml-[2px]" />
    </div>
  )
}

function Status() {
  return (
    <>
      <div className="absolute right-[53px] top-[677px] text-[13.6px] leading-5 font-bold text-[#222]">1 Profile | Area : 9024.00 in^2</div>
      <div className="absolute left-[1565px] top-[677px] w-[18px] h-[20px] bg-black rounded-[9px] rounded-br-[3px] flex items-center justify-center">
        <svg viewBox="0 0 12 12" className="w-3 h-3"><path d="M1 8L8 1M3 10L10 3M6 11L11 6" stroke="#ddd" strokeWidth="1.2" /></svg>
      </div>
    </>
  )
}

function Timeline() {
  const playBtn = 'w-[16px] h-[18px] shrink-0'
  return (
    <div className="relative h-[58px] bg-[#f0f0f0] border-t-2 border-[#e4e4e4] flex items-center shrink-0">
      <svg viewBox="0 0 16 18" className={`ml-[13px] ${playBtn}`}><path d="M1 1H3V17H1zM15 1V17L4 9z" fill="#555" /></svg>
      <svg viewBox="0 0 18 18" className={`ml-[15px] ${playBtn}`}><path d="M12 1V17L1 9zM14 6H17V12H14z" fill="#555" /></svg>
      <svg viewBox="0 0 16 18" className={`ml-[16px] ${playBtn}`}><path d="M1 0V18L15 9z" fill="#555" /></svg>
      <svg viewBox="0 0 18 18" className={`ml-[14px] ${playBtn}`}><path d="M6 1V17L17 9zM1 6H4V12H1z" fill="#555" /></svg>
      <svg viewBox="0 0 16 18" className={`ml-[16px] ${playBtn}`}><path d="M13 1H15V17H13zM1 1V17L12 9z" fill="#555" /></svg>
      <div className="relative ml-[24px] flex items-center">
        <div className="w-[29px] h-[30px] bg-[#0696d7] rounded-[2px] flex items-center justify-center">
          <SketchIcon pencil light className="w-[26px] h-[26px]" />
        </div>
        <div className="flex -ml-px">
          <div className="w-[30px] flex justify-center"><ExtrudeIcon className="w-[25px] h-[25px]" /></div>
          <div className="w-[30px] flex justify-center opacity-30"><ExtrudeIcon className="w-[25px] h-[25px]" /></div>
          <div className="w-[30px] flex justify-center opacity-30"><ExtrudeIcon className="w-[25px] h-[25px]" /></div>
          <div className="w-[30px] flex justify-center opacity-30"><SketchIcon pencil className="w-[25px] h-[25px]" /></div>
          <div className="w-[30px] flex justify-center opacity-30"><ExtrudeIcon className="w-[25px] h-[25px]" /></div>
          <div className="w-[30px] flex justify-center opacity-30"><SketchIcon pencil className="w-[25px] h-[25px]" /></div>
          <div className="w-[30px] flex justify-center opacity-30"><ExtrudeIcon className="w-[25px] h-[25px]" /></div>
        </div>
        <svg viewBox="0 0 212 8" className="absolute left-[15px] top-[29px] w-[212px] h-[8px]">
          <path d="M1 0V7H211V0M29 0V7M59 0V7M89 0V7M119 0V7M149 0V7M179 0V7" fill="none" stroke="#cfcfcf" strokeWidth="2" />
        </svg>
        <svg viewBox="0 0 14 41" className="absolute left-[233px] top-[-3px] w-[14px] h-[41px]">
          <path d="M0 0H14V4L9 10H5L0 4zM6 8H8V41H6z" fill="#555" />
        </svg>
      </div>
      <FaCog className="ml-auto mr-[17px] text-[18px] text-[#7a7a7a]" />
    </div>
  )
}

export default function App() {
  return (
    <div className="w-[1600px] h-[907px] overflow-hidden flex flex-col bg-white font-['Liberation_Sans',sans-serif]">
      <TitleBar />
      <Ribbon />
      <div className="relative flex-1">
        <Model />
        <Browser />
        <EditFeature />
        <Comments />
        <ValueInput />
        <NavBar />
        <Status />
        <div className="absolute left-[194px] top-[-7px] w-[174px] h-[29px] rounded-[15px] bg-[#4a4a4a] flex items-center justify-center text-[14px] font-bold text-white font-['Open_Sans',sans-serif]">Change Workspace</div>
      </div>
      <Timeline />
    </div>
  )
}
